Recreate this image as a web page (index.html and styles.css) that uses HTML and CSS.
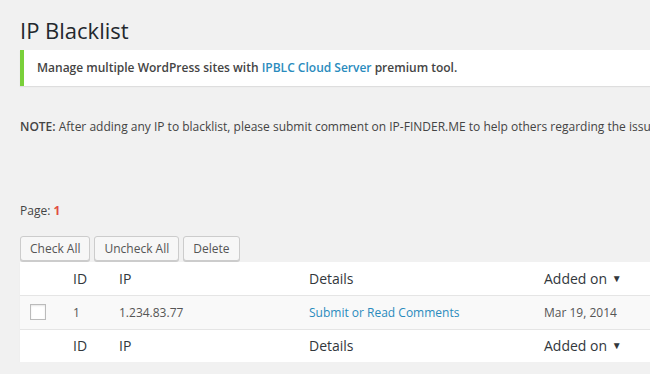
FILE: index.html
```html
<!DOCTYPE html>
<html lang="en">
<head>
  <meta charset="UTF-8">
  <title>IP Blacklist</title>
  <link rel="stylesheet" href="styles.css">
</head>
<body>
  <div class="wrap">
    <h1>IP Blacklist</h1>

    <div class="notice">
      <p>Manage multiple WordPress sites with <a href="#">IPBLC Cloud Server</a> premium tool.</p>
    </div>

    <p class="note"><b>NOTE:</b> After adding any IP to blacklist, please submit comment on IP-FINDER.ME to help others regarding the issue.</p>

    <p class="pages">Page: <span class="current">1</span></p>

    <div class="actions">
      <button class="btn">Check All</button>
      <button class="btn">Uncheck All</button>
      <button class="btn">Delete</button>
    </div>

    <table class="list">
      <colgroup>
        <col class="c-check">
        <col class="c-id">
        <col class="c-ip">
        <col class="c-details">
        <col class="c-date">
      </colgroup>
      <thead>
        <tr>
          <th></th>
          <th>ID</th>
          <th>IP</th>
          <th>Details</th>
          <th>Added on <span class="sort">&#9660;</span></th>
        </tr>
      </thead>
      <tbody>
        <tr>
          <td><span class="checkbox"></span></td>
          <td>1</td>
          <td>1.234.83.77</td>
          <td><a href="#">Submit or Read Comments</a></td>
          <td>Mar 19, 2014</td>
        </tr>
      </tbody>
      <tfoot>
        <tr>
          <th></th>
          <th>ID</th>
          <th>IP</th>
          <th>Details</th>
          <th>Added on <span class="sort">&#9660;</span></th>
        </tr>
      </tfoot>
    </table>
  </div>
</body>
</html>
```

FILE: styles.css
```css
* {
  margin: 0;
  padding: 0;
  box-sizing: border-box;
}

body {
  font-family: 'Open Sans', sans-serif;
  background: #f1f1f1;
  color: #444;
  overflow: hidden;
}

.wrap {
  width: 800px;
  padding: 16px 0 0 20px;
}

h1 {
  font-size: 22px;
  font-weight: 400;
  color: #23282d;
  line-height: 28px;
  margin-bottom: 6px;
}

.notice {
  background: #fff;
  border-left: 4px solid #7ad03a;
  box-shadow: 0 1px 1px rgba(0, 0, 0, 0.08);
  padding: 9px 13px;
}

.notice p {
  font-size: 12px;
  font-weight: 600;
  line-height: 18px;
}

a {
  color: #2a8bbd;
  text-decoration: none;
}

.note {
  font-size: 12px;
  line-height: 18px;
  margin-top: 32px;
  white-space: nowrap;
}

.note b {
  font-weight: 600;
}

.pages {
  font-size: 12px;
  line-height: 18px;
  margin-top: 66px;
}

.pages .current {
  color: #e14d43;
  font-weight: 700;
}

.actions {
  display: flex;
  gap: 4px;
  margin-top: 16px;
}

.btn {
  font-family: inherit;
  font-size: 12px;
  color: #555;
  background: #f7f7f7;
  border: 1px solid #ccc;
  border-radius: 3px;
  box-shadow: 0 1px 0 #ccc;
  height: 25px;
  padding: 0 9px;
}

.list {
  width: 780px;
  table-layout: fixed;
  border-collapse: collapse;
  background: #fff;
  box-shadow: 0 1px 1px rgba(0, 0, 0, 0.05);
  margin-top: 1px;
}

.c-check { width: 43px; }
.c-id { width: 46px; }
.c-ip { width: 190px; }
.c-details { width: 235px; }

.list th {
  font-size: 14px;
  font-weight: 400;
  color: #32373c;
  text-align: left;
  height: 33px;
  padding: 0 10px;
}

.list thead th {
  padding-top: 1px;
}

.list td {
  font-size: 12px;
  color: #555;
  height: 34px;
  padding: 0 10px;
  background: #f9f9f9;
  border-top: 1px solid #e5e5e5;
  border-bottom: 1px solid #e5e5e5;
}

.sort {
  font-size: 10px;
  vertical-align: 2px;
  margin-left: 1px;
}

.checkbox {
  display: block;
  width: 16px;
  height: 16px;
  border: 1px solid #bbb;
  background: #fff;
  box-shadow: inset 0 1px 2px rgba(0, 0, 0, 0.1);
}
```
